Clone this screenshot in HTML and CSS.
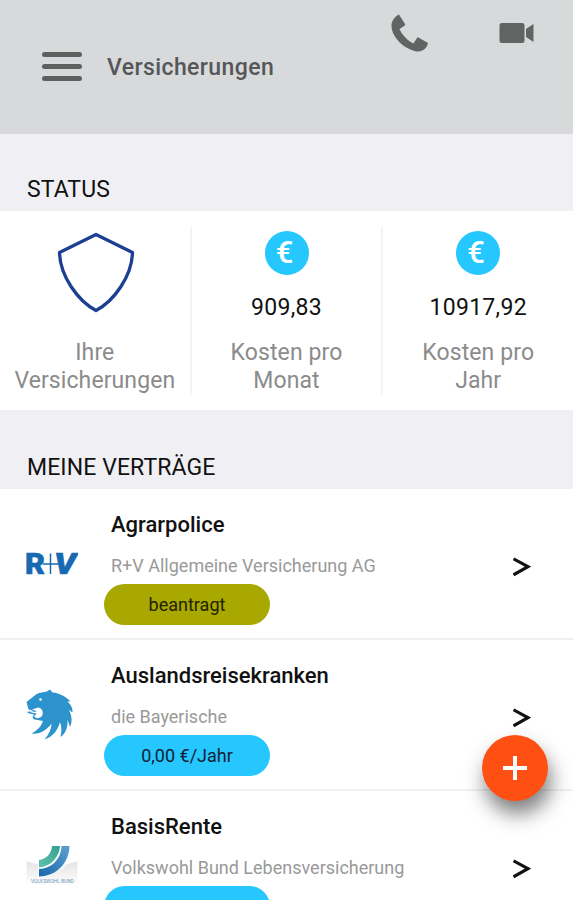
FILE: index.html
```html
<!DOCTYPE html>
<html lang="de">
<head>
  <meta charset="UTF-8">
  <meta name="viewport" content="width=device-width, initial-scale=1.0">
  <title>Versicherungen</title>
  <link rel="stylesheet" href="styles.css">
</head>
<body>
  <header>
    <div class="menu">
      <span></span>
      <span></span>
      <span></span>
    </div>
    <h1>Versicherungen</h1>
    <div class="actions">
      <svg class="phone" width="38" height="38" viewBox="0 0 38 38">
        <path d="M8 -0.500 L14 9 Q14.500 10 13.500 10.700 L8.500 14 C11 20 17 26 22.500 28.500 L26 23 Q26.500 22 27.500 22.500 L37 28 C36 33 32 37 26 36.500 C12 34 0 21 0.500 10 C0.800 5.500 4 1.500 8 -0.500 Z"/>
      </svg>
      <svg class="video" width="36" height="22" viewBox="0 0 36 22">
        <rect x="0.500" y="1" width="25" height="20" rx="2.500"/>
        <path d="M27 7 L34.500 2 V20 L27 15 Z"/>
      </svg>
    </div>
  </header>

  <h2>STATUS</h2>
  <div class="status">
    <div class="status-item">
      <svg class="shield" width="78" height="82" viewBox="0 0 78 82">
        <path d="M39 2.500 L75.500 20.500 C75 44 57 69 39 78.500 C21 69 3 44 2.500 20.500 Z"/>
      </svg>
      <p>Ihre<br>Versicherungen</p>
    </div>
    <div class="status-item">
      <div class="euro">€</div>
      <div class="amount">909,83</div>
      <p>Kosten pro<br>Monat</p>
    </div>
    <div class="status-item">
      <div class="euro">€</div>
      <div class="amount">10917,92</div>
      <p>Kosten pro<br>Jahr</p>
    </div>
  </div>

  <h2 class="contracts-title">MEINE VERTRÄGE</h2>
  <div class="contracts">
    <div class="contract">
      <svg class="logo" width="52" height="52" viewBox="0 0 52 52">
        <text class="rv" x="-1" y="36" textLength="20" lengthAdjust="spacingAndGlyphs">R</text>
        <path class="rv-plus" d="M17 26 H34 M24.500 15.500 V36"/>
        <text class="rv rv-v" x="28" y="36" textLength="22" lengthAdjust="spacingAndGlyphs">V</text>
      </svg>
      <div class="info">
        <h3>Agrarpolice</h3>
        <p>R+V Allgemeine Versicherung AG</p>
        <div class="pill requested">beantragt</div>
      </div>
      <svg class="arrow" width="18" height="20" viewBox="0 0 18 20"><path d="M0.500 1.800 L15 9.700 L0.500 17.900"/></svg>
    </div>
    <div class="contract">
      <svg class="logo" width="52" height="52" viewBox="0 0 52 52">
        <path class="lion" d="M0.500 13 L10 5.500 C14 3 18 3.500 21 2.500 L24 0.500 L26.500 3.500 C34 4 40 8 44.500 12.500 L41.500 12.500 C44.500 15.500 47 19 46.500 23.500 L43 21 C46 27 46.500 33 44 38 L41.500 30.500 C42 38 40 44 34.500 48 C35.500 43 36 38 34 33 C32 41 27 47.500 18.500 50.500 C23 45 25.500 40 25.500 34.500 C21 41 14 45.500 5.500 44.500 C12 41 15.500 37 17 32 L9 30.500 C6 30 6.500 27 8 25.500 L1.500 24 L2 22.500 L8 23 L5 21 L2.500 20.500 Z"/>
        <path class="lion-mouth" d="M6 20.500 L12 18.500 C17 19 18 25 15.500 27.500 C13 30 9 29.500 8 27 L11 24.500 L4 23.500 L11 22.500 Z"/>
        <circle class="lion-mouth" cx="14.500" cy="10.500" r="1.300"/>
      </svg>
      <div class="info">
        <h3>Auslandsreisekranken</h3>
        <p>die Bayerische</p>
        <div class="pill">0,00 €/Jahr</div>
      </div>
      <svg class="arrow" width="18" height="20" viewBox="0 0 18 20"><path d="M0.500 1.800 L15 9.700 L0.500 17.900"/></svg>
    </div>
    <div class="contract">
      <svg class="logo" width="52" height="52" viewBox="0 0 52 52">
        <defs>
          <linearGradient id="green" x1="1" y1="0" x2="0" y2="1">
            <stop offset="0" stop-color="#35a08c"/>
            <stop offset="1" stop-color="#62c2b0"/>
          </linearGradient>
          <linearGradient id="blue" x1="1" y1="0" x2="0" y2="1">
            <stop offset="0" stop-color="#5f9fd0"/>
            <stop offset="1" stop-color="#1668ad"/>
          </linearGradient>
          <linearGradient id="paper" x1="0" y1="0" x2="0" y2="1">
            <stop offset="0" stop-color="#e4e4e6"/>
            <stop offset="1" stop-color="#ffffff"/>
          </linearGradient>
        </defs>
        <path fill="url(#paper)" d="M0.500 21 Q26 31 51.500 21 V46 H0.500 Z"/>
        <path fill="#ffffff" d="M12 19 L24 5 H45 L38 28 L12 38 Z"/>
        <path fill="url(#green)" d="M26 6 H34 C33.500 17 25 26.500 13 27.500 V20 C20 19 25.500 14 26 6 Z"/>
        <path fill="url(#blue)" d="M35.500 6 H43.500 C43 22 32 36 13 36.500 V29 C26 28.500 35 19 35.500 6 Z"/>
        <text class="vb" x="5" y="43" textLength="43" lengthAdjust="spacingAndGlyphs">VOLKSWOHL BUND</text>
      </svg>
      <div class="info">
        <h3>BasisRente</h3>
        <p>Volkswohl Bund Lebensversicherung</p>
        <div class="pill">50,00 €/Monat</div>
      </div>
      <svg class="arrow" width="18" height="20" viewBox="0 0 18 20"><path d="M0.500 1.800 L15 9.700 L0.500 17.900"/></svg>
    </div>
  </div>

  <div class="add">
    <svg width="24" height="24" viewBox="0 0 24 24"><path d="M12 0 V24 M0 12 H24"/></svg>
  </div>
</body>
</html>
```
FILE: styles.css
```css
* {
  box-sizing: border-box;
}
html, body {
  height: 900px;
  overflow: hidden;
}
body {
  font-family: Roboto, sans-serif;
  margin: 0;
  background-color: #efeff4;
  color: #111;
}
h1, h2, h3, p {
  margin: 0;
}
header {
  display: flex;
  align-items: flex-start;
  height: 134px;
  padding: 0 38px 0 42px;
  background-color: #d8d9db;
  color: #555657;
}
.menu {
  display: flex;
  flex-direction: column;
  gap: 7px;
  width: 40px;
  padding-top: 52px;
}
.menu span {
  height: 5px;
  border-radius: 3px;
  background-color: #5e6060;
}
h1 {
  margin: 54px 0 0 25px;
  font-size: 23px;
  line-height: 28px;
  font-weight: 500;
  letter-spacing: 0.4px;
}
.actions {
  display: flex;
  align-items: flex-start;
  gap: 70px;
  margin-left: auto;
  padding-top: 15px;
  fill: #626464;
}
.phone {
  overflow: visible;
}
.video {
  margin-top: 7px;
}
h2 {
  height: 77px;
  padding: 42px 27px 0;
  font-size: 23px;
  line-height: 28px;
  font-weight: 400;
  letter-spacing: 0.1px;
}
.contracts-title {
  height: 78px;
  padding-top: 43px;
}
.status {
  display: flex;
  height: 199px;
  margin-bottom: 1px;
  padding: 16px 0 15px;
  background-color: #fff;
}
.status-item {
  display: flex;
  flex: 1;
  flex-direction: column;
  align-items: center;
  border-right: 2px solid #f4f4f5;
  text-align: center;
}
.status-item:last-child {
  border-right: none;
}
.status-item p {
  margin-top: auto;
  color: #8b8b8b;
  font-size: 23px;
  line-height: 28px;
  letter-spacing: 0.1px;
}
.shield {
  margin: 5px 0 0 3px;
  fill: none;
  stroke: #1c3f94;
  stroke-width: 3.3;
  stroke-linejoin: round;
}
.euro {
  width: 44px;
  height: 44px;
  margin-top: 4px;
  padding-right: 4px;
  border-radius: 50%;
  background-color: #26c6ff;
  color: #fff;
  font-size: 31px;
  line-height: 43px;
  font-weight: 500;
}
.amount {
  margin-top: 19px;
  font-size: 23px;
  line-height: 28px;
  letter-spacing: 0.3px;
}
.contract {
  display: flex;
  height: 151px;
  padding: 22px 41px 0 26px;
  border-bottom: 2px solid #f0f0f1;
  background-color: #fff;
}
.logo {
  flex: none;
  margin-top: 27px;
}
.rv {
  fill: #1769b1;
  stroke: #1769b1;
  stroke-width: 0.6;
  font-size: 29px;
  font-weight: 900;
}
.rv-v {
  font-style: italic;
}
.rv-plus {
  fill: none;
  stroke: #1769b1;
  stroke-width: 1.5;
}
.lion {
  fill: #2c93cc;
}
.lion-mouth {
  fill: #fff;
}
.vb {
  fill: #6b95b8;
  font-size: 6px;
}
.info {
  flex: 1;
  padding-left: 33px;
}
h3 {
  font-size: 22px;
  line-height: 28px;
  font-weight: 500;
}
.info p {
  margin-top: 15px;
  color: #999;
  font-size: 18px;
  line-height: 24px;
}
.pill {
  width: 166px;
  height: 41px;
  margin: 6px 0 0 -7px;
  border-radius: 21px;
  background-color: #26c6ff;
  color: #123;
  font-size: 18px;
  line-height: 42px;
  text-align: center;
}
.requested {
  background-color: #a8a800;
  color: #222200;
}
.arrow {
  flex: none;
  margin: 46px 1px 0 -1px;
  fill: none;
  stroke: #111;
  stroke-width: 3.2;
}
.add {
  position: fixed;
  right: 25px;
  bottom: 99px;
  display: flex;
  align-items: center;
  justify-content: center;
  width: 66px;
  height: 66px;
  border-radius: 50%;
  background-color: #ff5014;
  box-shadow: 3px 13px 20px rgba(0, 0, 0, 0.5);
}
.add path {
  stroke: #fff;
  stroke-width: 4;
}
```
